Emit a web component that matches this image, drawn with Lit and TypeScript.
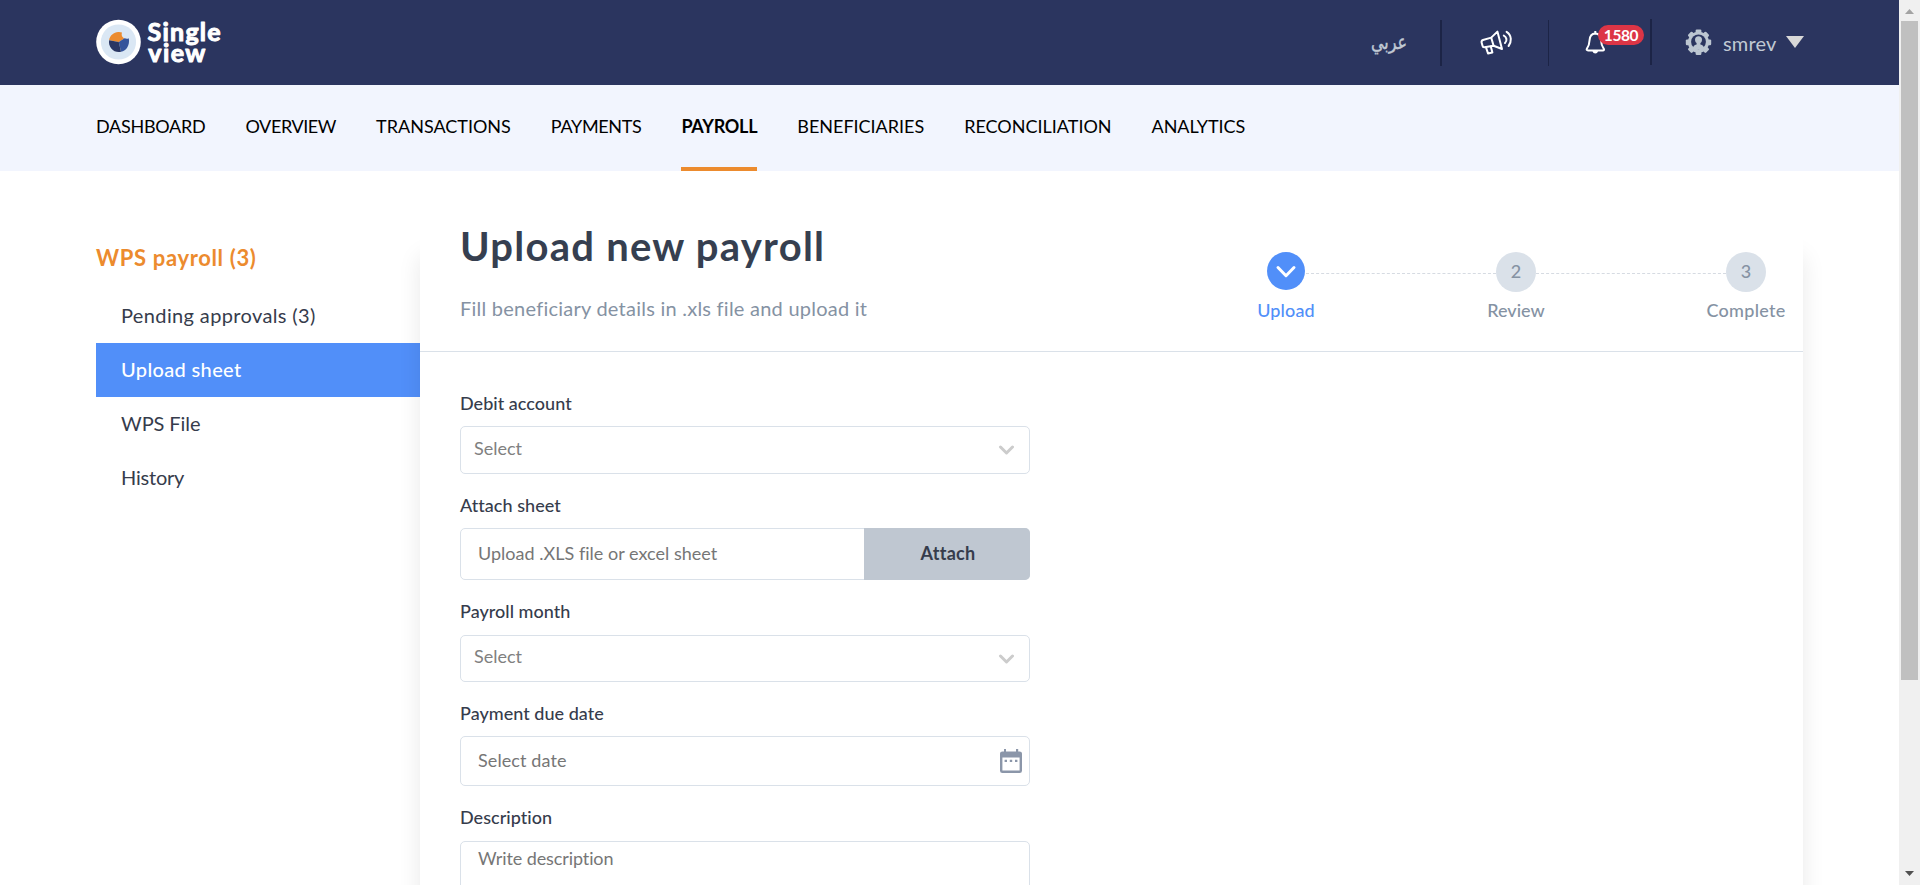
import { LitElement, html, css, svg } from "lit";
import { customElement, state } from "lit/decorators.js";
import { classMap } from "lit/directives/class-map.js";

/* Label plus the tracking (in px) it is set with. */
type Tracked = { label: string; ls: number };

const NAV: Tracked[] = [
  { label: "DASHBOARD", ls: -0.27 },
  { label: "OVERVIEW", ls: -0.4 },
  { label: "TRANSACTIONS", ls: -0.01 },
  { label: "PAYMENTS", ls: -0.34 },
  { label: "PAYROLL", ls: -0.25 },
  { label: "BENEFICIARIES", ls: -0.02 },
  { label: "RECONCILIATION", ls: 0 },
  { label: "ANALYTICS", ls: -0.1 },
];

const MENU: Tracked[] = [
  { label: "Pending approvals (3)", ls: 0.37 },
  { label: "Upload sheet", ls: 0.35 },
  { label: "WPS File", ls: -0.08 },
  { label: "History", ls: -0.2 },
];

@customElement("sv-logo")
class SvLogo extends LitElement {
  static styles = css`
    :host { display: block; width: 140px; height: 52px; }
    svg { display: block; overflow: visible; }
    text {
      font-family: Lato, sans-serif;
      font-weight: 700;
      font-size: 25px;
      fill: #fff;
      stroke: #fff;
      stroke-width: 1;
      stroke-linejoin: round;
    }
  `;
  render() {
    return html`<svg width="140" height="52" viewBox="0 0 140 52">
      <circle cx="22.5" cy="24" r="22.3" fill="#fff" />
      <circle cx="22.5" cy="24" r="17.6" fill="#dae7f4" />
      <path d="M22.8 24 13.1 22.2C13.8 17.5 18.4 13.6 23 14.1L26 14.5C25 17.5 26.5 19.8 28.5 20.3Z" fill="#ec8b2e" />
      <path d="M22.8 24 28.5 20.3C30.5 21 32 20.8 32.8 20.2C34 27 30.5 33 25 33.8Z" fill="#35549b" />
      <path d="M22.8 24 25 33.8C18 35.3 12 29.5 13.1 22.2Z" fill="#2a3663" />
      <text x="51.5" y="23" textLength="73.2">Single</text>
      <text x="52.3" y="44.2" textLength="57">view</text>
    </svg>`;
  }
}

@customElement("sv-header")
class SvHeader extends LitElement {
  static styles = css`
    :host {
      display: flex;
      justify-content: space-between;
      height: 85px;
      box-sizing: border-box;
      padding: 0 95px 0 96px;
      background: #2b355f;
      color: #c0c9d3;
    }
    sv-logo { margin-top: 18px; }
    .tools { display: flex; align-items: flex-start; height: 85px; }
    .lang {
      width: 69px;
      font: 20px/28px "DejaVu Sans", sans-serif;
      margin-top: 28px;
      transform: scaleX(0.8);
      transform-origin: left;
      -webkit-text-stroke: 0.4px #c0c9d3;
    }
    .sep { width: 2px; height: 46px; margin-top: 20px; background: #1c2446; }
    .sep.thin { width: 1px; }
    .sep.high { margin-top: 19px; }
    .horn { width: 106px; margin-top: 29px; padding-left: 38px; box-sizing: border-box; }
    .bell { position: relative; width: 101px; margin-top: 30px; padding-left: 36px; box-sizing: border-box; }
    .badge {
      position: absolute;
      left: 49px;
      top: -5px;
      width: 46px;
      height: 20px;
      border-radius: 10px;
      background: #dc3546;
      color: #fff;
      text-align: center;
      font: 700 15.5px/20px Lato, sans-serif;
      letter-spacing: -0.4px;
    }
    .user { display: flex; align-items: flex-start; padding-left: 33px; margin-top: 29px; }
    .name { font: 20px/28px Lato, sans-serif; letter-spacing: 0.2px; margin-left: 11px; width: 63px; }
    .caret { margin-top: 7px; }
    svg { display: block; }
  `;
  render() {
    const teeth = [0, 45, 90, 135, 180, 225, 270, 315];
    return html`
      <sv-logo></sv-logo>
      <div class="tools">
        <div class="lang" lang="ar">عربي</div>
        <i class="sep"></i>
        <div class="horn">
          <svg width="34" height="28" viewBox="0 0 34 28" fill="none" stroke="#fff" stroke-width="2" stroke-linejoin="round" stroke-linecap="round">
            <path d="M1.6 13.6Q1.2 11.6 3 11L11.2 8.6 17.4 2.6 22 20 13.6 16.8 4.4 18.2Q2.8 18.4 2.5 16.8Z" />
            <path d="M11.2 8.6 13.6 16.8M6 18.4 8 24.4 12.4 23.4 10.8 17.4" />
            <path d="M23.8 6.6Q26 7.6 26.4 10T25 14M26.6 2.8Q30.6 5.4 30.8 9.8T28.6 17" />
          </svg>
        </div>
        <i class="sep thin"></i>
        <div class="bell">
          <svg width="22" height="25" viewBox="0 0 22 25" fill="none" stroke="#fff" stroke-width="2" stroke-linejoin="round">
            <path d="M10.3 3.4C6.4 3.6 4.8 6.6 4.6 10C4.4 14.4 3.8 16.2 1.8 18.8Q1.2 20.4 3 20.4H17.8Q19.6 20.4 18.8 18.8C16.8 16.2 16.2 14.4 16 10C15.8 6.6 14.2 3.6 10.3 3.4Z" />
            <path d="M10.3 1V3.4" />
            <path d="M7.4 21H13.2Q12.4 23.6 10.3 23.6T7.4 21Z" fill="#fff" stroke="none" />
          </svg>
          <span class="badge">1580</span>
        </div>
        <i class="sep high"></i>
        <div class="user">
          <svg width="27" height="27" viewBox="0 0 27 27">
            <g fill="#bcc6d1">
              <circle cx="13.5" cy="13.3" r="10.6" />
              ${teeth.map(
                (a) => svg`<rect x="10.6" y="0.6" width="5.8" height="5" rx="1.2" transform="rotate(${a} 13.5 13.3)" />`
              )}
            </g>
            <circle cx="13.5" cy="12.8" r="7.4" fill="#2b355f" />
            <circle cx="13.5" cy="10.8" r="3.5" fill="#bcc6d1" />
            <path d="M7.6 20.5Q8 15.6 11.6 15.4V13H15.4V15.4Q19 15.6 19.4 20.5Z" fill="#bcc6d1" />
          </svg>
          <span class="name">smrev</span>
          <svg class="caret" width="18" height="12" viewBox="0 0 18 12"><path d="M0 0H18L9 12Z" fill="#d8d8d8" /></svg>
        </div>
      </div>
    `;
  }
}

@customElement("sv-nav")
class SvNav extends LitElement {
  static styles = css`
    :host {
      display: flex;
      gap: 40px;
      height: 86px;
      box-sizing: border-box;
      padding: 0 96px;
      background: #f2f5fe;
    }
    a {
      display: block;
      height: 82px;
      border-bottom: 4px solid transparent;
      font: 18px/82px Lato, sans-serif;
      color: #000;
      white-space: nowrap;
    }
    a.on { font-weight: 700; border-color: #ec8b2e; }
  `;
  @state() private active = "PAYROLL";
  render() {
    return NAV.map(
      (n) => html`<a
        class=${classMap({ on: n.label === this.active })}
        style="letter-spacing:${n.ls}px"
        @click=${() => (this.active = n.label)}
        >${n.label}</a
      >`
    );
  }
}

@customElement("sv-menu")
class SvMenu extends LitElement {
  static styles = css`
    :host { display: block; width: 324px; padding-top: 69px; font-family: Lato, sans-serif; }
    h2 {
      margin: 0 0 13px;
      font: 700 22px/36px Lato, sans-serif;
      letter-spacing: 0.65px;
      color: #ec8b2e;
    }
    a {
      display: block;
      height: 54px;
      box-sizing: border-box;
      padding-left: 25px;
      font-size: 20px;
      line-height: 53px;
      color: #363c4c;
    }
    a.on { background: #518ff9; color: #fff; font-weight: 500; }
  `;
  @state() private active = "Upload sheet";
  render() {
    return html`<h2>WPS payroll (3)</h2>
      ${MENU.map(
        (m) => html`<a
          class=${classMap({ on: m.label === this.active })}
          style="letter-spacing:${m.ls}px"
          @click=${() => (this.active = m.label)}
          >${m.label}</a
        >`
      )}`;
  }
}

@customElement("sv-steps")
class SvSteps extends LitElement {
  static styles = css`
    :host {
      display: grid;
      grid-template-columns: repeat(3, 80px);
      gap: 150px;
      font: 18px/22px Lato, sans-serif;
      color: #8592a3;
    }
    .step { position: relative; display: flex; flex-direction: column; align-items: center; font-weight: 500; }
    .step + .step::before {
      content: "";
      position: absolute;
      right: 60px;
      top: 21px;
      width: 190px;
      border-top: 1px dashed #d6dbe2;
    }
    .dot {
      display: flex;
      align-items: center;
      justify-content: center;
      width: 40px;
      height: 40px;
      margin-bottom: 7px;
      padding-bottom: 3px;
      box-sizing: border-box;
      border-radius: 50%;
      background: #dae1e9;
      font-weight: 500;
    }
    .on { color: #518ff9; letter-spacing: 0.15px; }
    .on .dot { width: 38px; height: 38px; background: #518ff9; margin-bottom: 9px; padding: 0; }
    .wide { letter-spacing: 0.3px; }
  `;
  render() {
    return html`
      <div class="step on">
        <span class="dot">
          <svg width="22" height="16" viewBox="0 0 22 16" fill="none" stroke="#fff" stroke-width="3" stroke-linecap="round" stroke-linejoin="round">
            <path d="M3 4.5 11 12.7 19 4.5" />
          </svg>
        </span>
        <span>Upload</span>
      </div>
      <div class="step"><span class="dot">2</span><span>Review</span></div>
      <div class="step"><span class="dot">3</span><span class="wide">Complete</span></div>
    `;
  }
}

@customElement("sv-form")
class SvForm extends LitElement {
  static styles = css`
    :host { display: block; width: 570px; font: 18px/22px Lato, sans-serif; }
    label {
      display: block;
      height: 34px;
      font-weight: 500;
      color: #363c4c;
      letter-spacing: 0.03px;
    }
    .after { margin-top: -1px; height: 35px; }
    .box {
      display: flex;
      align-items: center;
      justify-content: space-between;
      box-sizing: border-box;
      border: 1px solid #dae1e9;
      border-radius: 5px;
      color: #767676;
      background: #fff;
    }
    .select { padding: 0 15px 0 13px; margin-bottom: 20px; color: #808080; }
    .debit { height: 48px; }
    .debit span { padding-bottom: 4px; }
    .month span { padding-bottom: 5px; }
    .month { height: 47px; }
    .attach { height: 52px; padding-left: 17px; margin-bottom: 21px; }
    .attach button {
      width: 166px;
      height: 52px;
      margin: -1px;
      padding: 0 0 2px 2px;
      border: 0;
      border-radius: 0 5px 5px 0;
      background: #bfc7d1;
      color: #363c4c;
      font: 700 18px Lato, sans-serif;
      letter-spacing: 0.3px;
    }
    .attach span { padding-bottom: 2px; letter-spacing: 0.02px; }
    .date { height: 50px; padding: 0 7px 0 17px; margin-bottom: 21px; }
    .date span { letter-spacing: 0.1px; padding-bottom: 2px; }
    .area { height: 150px; padding: 5px 17px; align-items: flex-start; letter-spacing: -0.1px; }
    svg { display: block; }
  `;
  private chevron() {
    return html`<svg width="16" height="10" viewBox="0 0 16 10" fill="none" stroke="#ccc" stroke-width="3" stroke-linecap="round" stroke-linejoin="round">
      <path d="M2.5 2 8.5 8 14.5 2" />
    </svg>`;
  }
  render() {
    return html`
      <label>Debit account</label>
      <div class="box select debit"><span>Select</span>${this.chevron()}</div>
      <label>Attach sheet</label>
      <div class="box attach"><span>Upload .XLS file or excel sheet</span><button>Attach</button></div>
      <label class="after">Payroll month</label>
      <div class="box select month"><span>Select</span>${this.chevron()}</div>
      <label>Payment due date</label>
      <div class="box date">
        <span>Select date</span>
        <svg width="22" height="24" viewBox="0 0 22 24">
          <path
            fill="#8b96a9"
            fill-rule="evenodd"
            d="M4 0H6V2.4H16V0H18.2V2.4H19.6Q22 2.4 22 4.6V21.8Q22 24 19.6 24H2.4Q0 24 0 21.8V4.6Q0 2.4 2.4 2.4H4ZM2.4 8.4V21.6H19.6V8.4ZM4.6 10.8H7V13H4.6ZM9.8 10.8H12.2V13H9.8ZM15 10.8H17.4V13H15Z"
          />
        </svg>
      </div>
      <label class="after">Description</label>
      <div class="box area"><span>Write description</span></div>
    `;
  }
}

@customElement("app-root")
class AppRoot extends LitElement {
  static styles = css`
    :host {
      display: flex;
      width: 1920px;
      height: 885px;
      overflow: hidden;
      background: #fff;
      font-family: Lato, sans-serif;
    }
    .page { width: 1899px; height: 885px; overflow: hidden; }
    .body { display: flex; padding-left: 96px; }
    .panel {
      position: relative;
      width: 1383px;
      height: 900px;
      margin-top: 30px;
      background: #fff;
      box-shadow: 0 55px 22px rgba(0, 0, 0, 0.09);
    }
    .head {
      display: flex;
      justify-content: space-between;
      height: 151px;
      box-sizing: border-box;
      padding: 0 17px 0 40px;
      border-bottom: 1px solid #dae1e9;
    }
    h1 {
      margin: 20px 0 0;
      font: 700 40px/50px Lato, sans-serif;
      letter-spacing: 1.25px;
      color: #363f50;
    }
    p { margin: 24px 0 0; font-size: 20px; line-height: 26px; letter-spacing: 0.24px; color: #8592a3; }
    sv-steps { margin-top: 51px; }
    sv-form { margin: 40px 0 0 40px; }
    .bar {
      display: flex;
      flex-direction: column;
      align-items: center;
      justify-content: space-between;
      width: 21px;
      height: 885px;
      background: #f0f0f0;
    }
    .thumb { width: 17px; height: 659px; margin: 7px 0 auto; background: #c0c0c0; }
    .bar svg { display: block; }
    .up { margin-top: 9px; }
    .down { margin-bottom: 9px; }
  `;
  render() {
    return html`
      <div class="page">
        <sv-header></sv-header>
        <sv-nav></sv-nav>
        <div class="body">
          <sv-menu></sv-menu>
          <section class="panel">
            <div class="head">
              <div>
                <h1>Upload new payroll</h1>
                <p>Fill beneficiary details in .xls file and upload it</p>
              </div>
              <sv-steps></sv-steps>
            </div>
            <sv-form></sv-form>
          </section>
        </div>
      </div>
      <div class="bar">
        <svg class="up" width="9" height="5"><path d="M4.5 0 9 5H0Z" fill="#a3a3a3" /></svg>
        <div class="thumb"></div>
        <svg class="down" width="9" height="5"><path d="M0 0H9L4.5 5Z" fill="#505050" /></svg>
      </div>
    `;
  }
}
